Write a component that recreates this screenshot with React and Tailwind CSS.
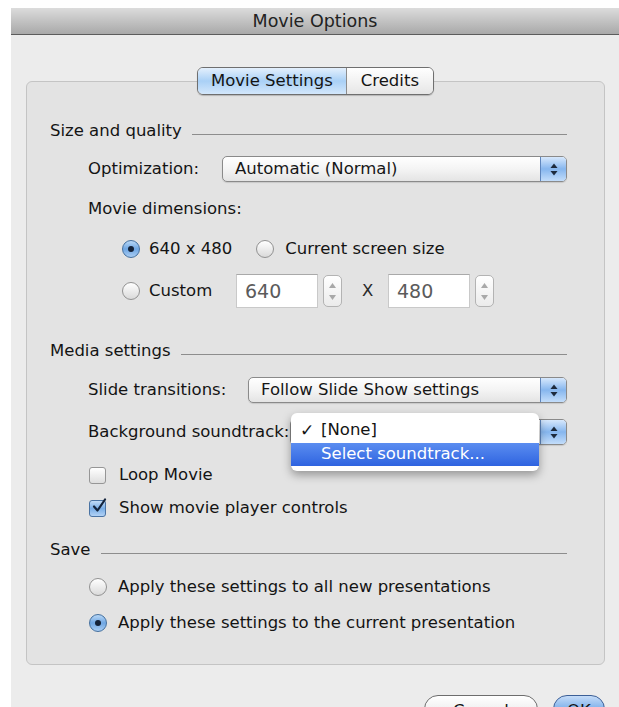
import React from "react";

const font = { fontFamily: '"DejaVu Sans", "Liberation Sans", sans-serif' };

function Arrows({ className = "" }) {
  return (
    <svg width="8" height="13" viewBox="0 0 8 13" className={className}>
      <path d="M4 0.5 L7.5 5 L0.5 5 Z" fill="#1d2a3d" />
      <path d="M4 12.5 L7.5 8 L0.5 8 Z" fill="#1d2a3d" />
    </svg>
  );
}

function Popup({ label, className = "" }) {
  return (
    <div
      className={`flex h-[26px] items-stretch overflow-hidden rounded-[5px] border border-[#8a8a8a] bg-gradient-to-b from-white via-[#f4f4f4] to-[#e4e4e4] shadow-[0_1px_1px_rgba(0,0,0,0.12)] ${className}`}
    >
      <span className="flex flex-1 items-center pl-3 text-[#161616]">{label}</span>
      <span className="flex w-[26px] items-center justify-center border-l border-[#5f86bd] bg-gradient-to-b from-[#d7e8fc] via-[#86b6ee] to-[#c3ddfa]">
        <Arrows />
      </span>
    </div>
  );
}

function Radio({ on }) {
  return (
    <span
      className={`flex h-[18px] w-[18px] shrink-0 items-center justify-center rounded-full border ${
        on
          ? "border-[#44709f] bg-gradient-to-b from-[#b9d8f6] via-[#6fa6e2] to-[#a9cdf3]"
          : "border-[#929292] bg-gradient-to-b from-white to-[#dadada]"
      }`}
    >
      {on && <span className="h-[6px] w-[6px] rounded-full bg-[#142238]" />}
    </span>
  );
}

function Check({ on }) {
  return (
    <span
      className={`relative flex h-[17px] w-[17px] shrink-0 items-center justify-center rounded-[3px] border ${
        on
          ? "border-[#4a73a3] bg-gradient-to-b from-[#c2dcf7] via-[#78ade6] to-[#b2d2f5]"
          : "border-[#969696] bg-gradient-to-b from-white to-[#dedede]"
      }`}
    >
      {on && (
        <svg width="16" height="16" viewBox="0 0 16 16" className="absolute -top-[3px] left-[1px]">
          <path d="M3 8.5 L6.5 12.5 L14 1.5" fill="none" stroke="#14243c" strokeWidth="2.2" strokeLinecap="round" strokeLinejoin="round" />
        </svg>
      )}
    </span>
  );
}

function Stepper() {
  return (
    <span className="flex h-[32px] w-[19px] flex-col items-center justify-center gap-[7px] rounded-[5px] border border-[#b3b3b3] bg-gradient-to-b from-white to-[#ebebeb]">
      <svg width="7" height="5" viewBox="0 0 7 5">
        <path d="M3.5 0 L7 5 L0 5 Z" fill="#a8a8a8" />
      </svg>
      <svg width="7" height="5" viewBox="0 0 7 5">
        <path d="M3.5 5 L7 0 L0 0 Z" fill="#a8a8a8" />
      </svg>
    </span>
  );
}

function NumberField({ value }) {
  return (
    <span className="flex h-[34px] w-[82px] items-center border border-[#c9c9c9] border-t-[#a9a9a9] bg-white pl-[8px] text-[19px] text-[#5b5b5b]">
      {value}
    </span>
  );
}

function Section({ title }) {
  return (
    <div className="flex h-[20px] items-center gap-[10px]">
      <span>{title}</span>
      <span className="mt-[7px] h-px flex-1 bg-[#8d8d8d]" />
    </div>
  );
}

export default function App() {
  return (
    <div className="h-[707px] w-[619px] overflow-hidden bg-white pl-[11px] pt-[8px] text-[16.5px] text-[#141414]" style={font}>
      <div className="flex h-full flex-col bg-[#ececec]">
        <div className="flex h-[32px] items-center justify-center border-b border-[#5c5c5c] bg-gradient-to-b from-[#dcdcdc] to-[#a9a9a9] text-[17.5px] text-[#222]">
          Movie Options
        </div>

        <div className="flex flex-col pl-[15px] pr-[14px]">
          <div className="relative z-10 mt-[32px] flex justify-center">
            <div className="flex h-[28px] overflow-hidden rounded-[6px] border border-[#6f6f6f] shadow-[0_1px_1px_rgba(0,0,0,0.2)]">
              <span className="flex items-center border-r border-[#8c8c8c] bg-gradient-to-b from-[#e4f0fd] via-[#a9d0f6] to-[#d3e7fb] px-[13px]">
                Movie Settings
              </span>
              <span className="flex items-center bg-gradient-to-b from-white to-[#e6e6e6] px-[14px]">Credits</span>
            </div>
          </div>

          <div className="-mt-[14px] flex h-[584px] flex-col rounded-[6px] border border-[#c4c4c4] bg-[#e3e3e3] pl-[23px] pr-[37px] pt-[39px]">
            <Section title="Size and quality" />

            <div className="mt-[15px] flex h-[26px] items-center pl-[38px]">
              <span className="w-[134px]">Optimization:</span>
              <Popup label="Automatic (Normal)" className="flex-1" />
            </div>

            <div className="mt-[17px] flex h-[20px] items-center pl-[38px]">Movie dimensions:</div>

            <div className="mt-[20px] flex h-[20px] items-center pl-[72px]">
              <Radio on />
              <span className="ml-[9px]">640 x 480</span>
              <span className="ml-[24px]">
                <Radio />
              </span>
              <span className="ml-[11px]">Current screen size</span>
            </div>

            <div className="mt-[15px] flex h-[34px] items-center pl-[72px]">
              <Radio />
              <span className="ml-[9px] w-[87px]">Custom</span>
              <NumberField value="640" />
              <span className="ml-[5px]">
                <Stepper />
              </span>
              <span className="ml-[20px] w-[26px] text-[#2a2a2a]">X</span>
              <NumberField value="480" />
              <span className="ml-[5px]">
                <Stepper />
              </span>
            </div>

            <div className="mt-[33px]">
              <Section title="Media settings" />
            </div>

            <div className="mt-[16px] flex h-[26px] items-center pl-[38px]">
              <span className="w-[160px]">Slide transitions:</span>
              <Popup label="Follow Slide Show settings" className="flex-1" />
            </div>

            <div className="relative mt-[16px] flex h-[26px] items-center pl-[38px]">
              <span className="w-[202px] whitespace-nowrap">Background soundtrack:</span>
              <Popup label="" className="flex-1" />

              {/* open popup menu */}
              <div className="absolute left-[241px] top-[-6px] w-[248px] rounded-[6px] bg-white pb-[5px] pt-[5px] shadow-[0_4px_10px_rgba(0,0,0,0.35)]">
                <div className="flex h-[25px] items-center">
                  <span className="w-[30px] pl-[9px] text-[17px] font-bold">✓</span>
                  <span>[None]</span>
                </div>
                <div className="flex h-[23px] items-center bg-gradient-to-b from-[#5b8df0] to-[#2f63e0] pl-[30px] text-white">
                  Select soundtrack...
                </div>
              </div>
            </div>

            <div className="mt-[20px] flex h-[20px] items-center pl-[39px]">
              <Check />
              <span className="ml-[13px]">Loop Movie</span>
            </div>

            <div className="mt-[13px] flex h-[20px] items-center pl-[39px]">
              <Check on />
              <span className="ml-[13px]">Show movie player controls</span>
            </div>

            <div className="mt-[22px]">
              <Section title="Save" />
            </div>

            <div className="mt-[17px] flex h-[20px] items-center pl-[39px]">
              <Radio />
              <span className="ml-[11px]">Apply these settings to all new presentations</span>
            </div>

            <div className="mt-[16px] flex h-[20px] items-center pl-[39px]">
              <Radio on />
              <span className="ml-[11px]">Apply these settings to the current presentation</span>
            </div>
          </div>

          <div className="mt-[30px] flex justify-end gap-[15px]">
            <span className="flex h-[28px] w-[114px] items-start justify-center rounded-full border border-[#6d6d6d] bg-gradient-to-b from-white to-[#e3e3e3] pt-[3px]">
              Cancel
            </span>
            <span className="flex h-[28px] w-[52px] items-start justify-center rounded-full border border-[#3c5f97] bg-gradient-to-b from-[#c5dcf8] via-[#7eb0ea] to-[#b8d6f7] pt-[3px]">
              OK
            </span>
          </div>
        </div>
      </div>
    </div>
  );
}
